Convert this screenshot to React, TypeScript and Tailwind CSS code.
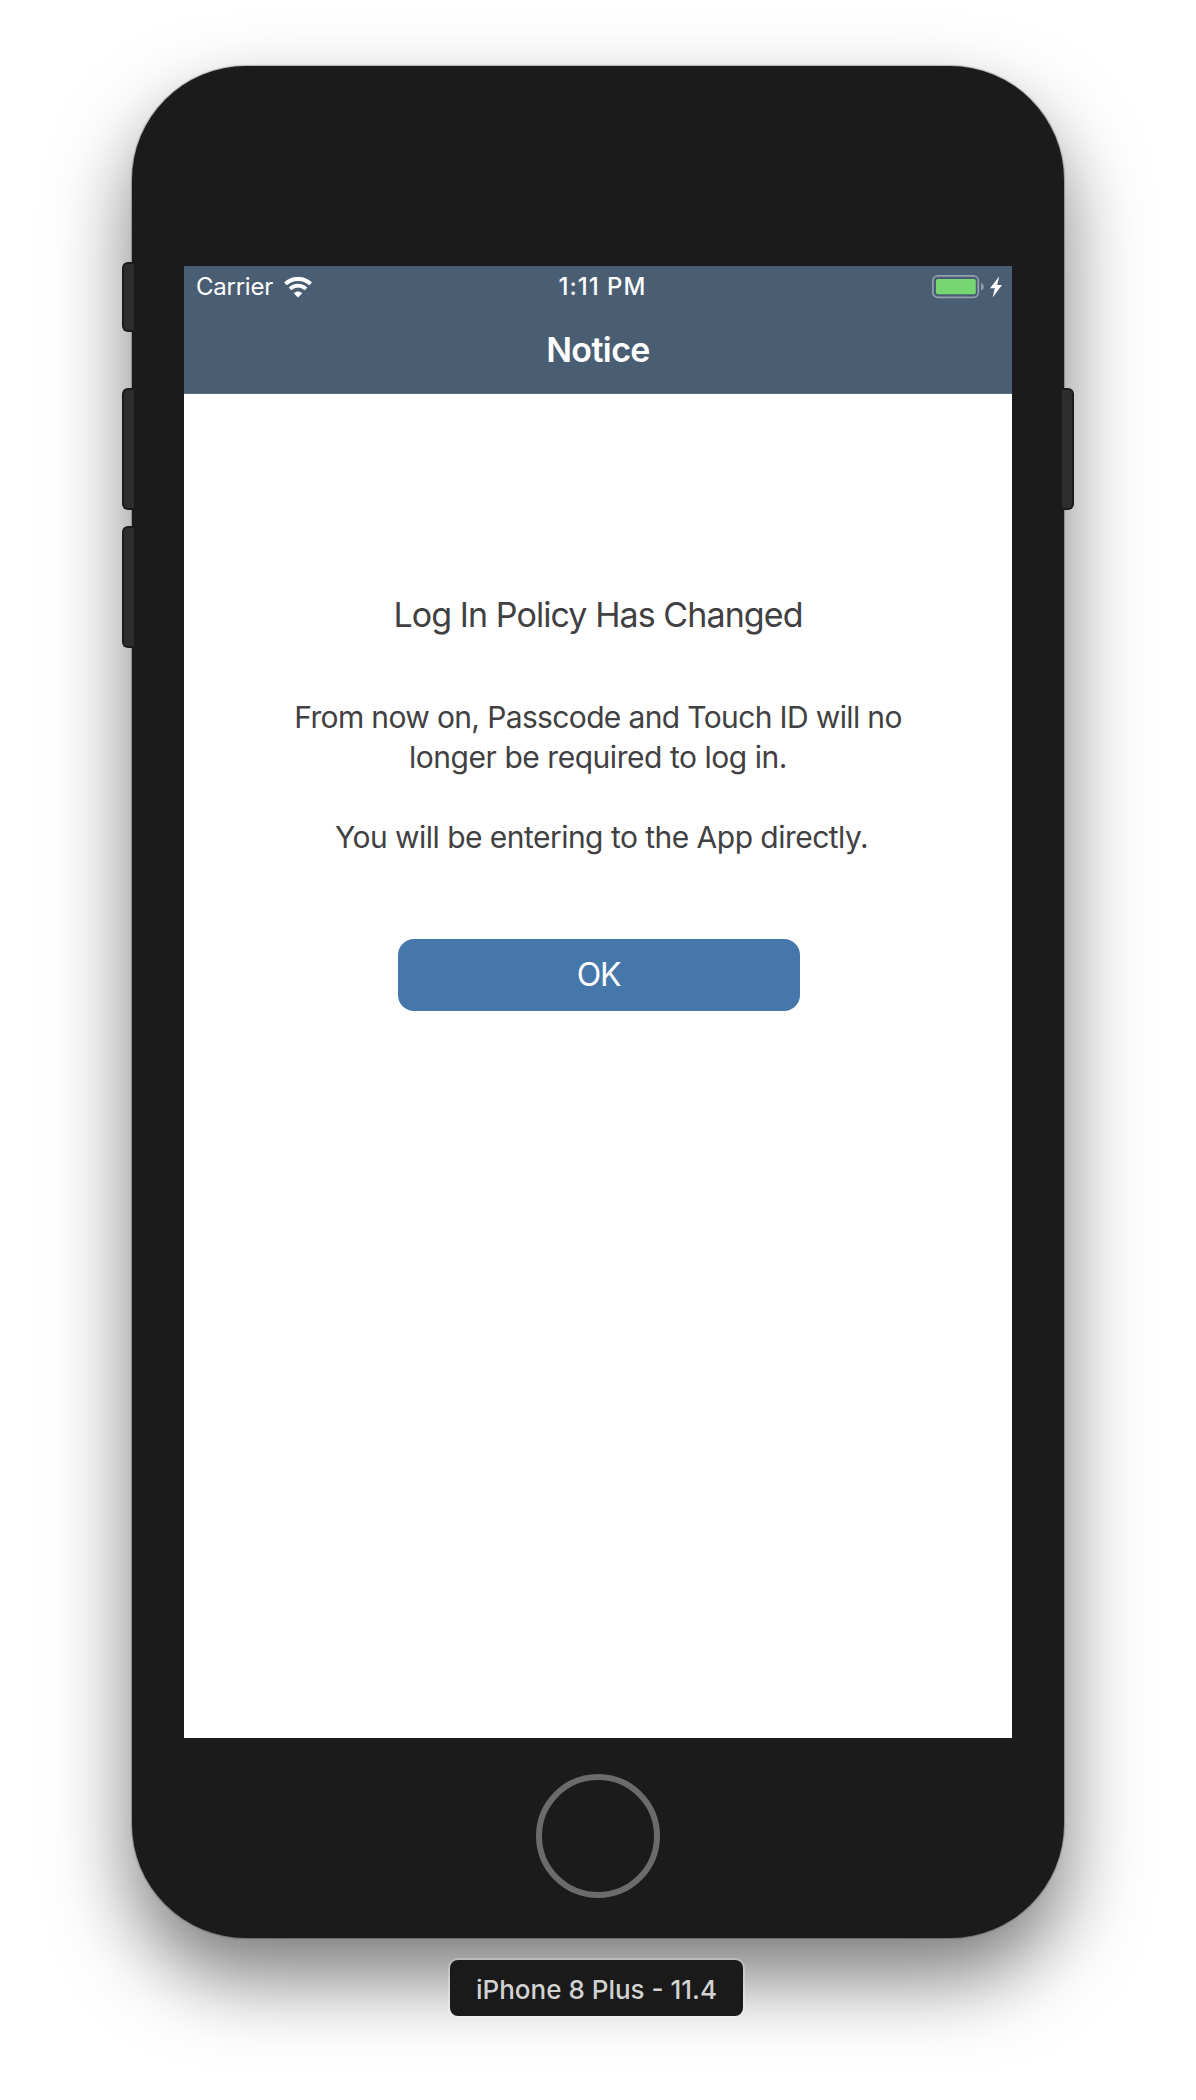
import React from "react";

function WifiIcon() {
  return (
    <svg width="28" height="21" viewBox="0 0 28 21" fill="none">
      <path d="M1.4 6.9C8.6 0.2 19.4 0.2 26.6 6.9" stroke="#fff" strokeWidth="4" />
      <path d="M6 11.8C10.6 7.6 17.4 7.6 22 11.8" stroke="#fff" strokeWidth="3.8" />
      <path d="M9.8 16.2C12.2 14 15.8 14 18.2 16.2L14 20.4Z" fill="#fff" />
    </svg>
  );
}

function BatteryIcon() {
  return (
    <svg width="52" height="24" viewBox="0 0 52 24" fill="none">
      <rect x="0.9" y="0.9" width="45.4" height="21.4" rx="4.6" stroke="#929EAC" strokeWidth="1.7" />
      <rect x="4" y="3.9" width="39.8" height="15.4" rx="2" fill="#76D672" />
      <path d="M49 8C51 9 51.8 10.2 51.8 11.8C51.8 13.4 51 14.6 49 15.6Z" fill="#929EAC" />
    </svg>
  );
}

function BoltIcon() {
  return (
    <svg width="12" height="22" viewBox="0 0 12 22" fill="#fff">
      <path d="M9.2 0.5L0 12.2H4.8L2.6 21.5L12 9H7.2Z" />
    </svg>
  );
}

export default function App() {
  return (
    <div className="flex h-[2100px] w-[1196px] flex-col items-center overflow-hidden bg-white pt-[66px] font-['Inter',sans-serif]">
      <div className="relative h-[1872px] w-[932px] shrink-0">
        <div className="flex h-full w-full flex-col items-center rounded-[114px] bg-[#1b1b1b] pt-[200px] shadow-[0_0_1px_1px_rgba(0,0,0,0.25),0_40px_80px_rgba(0,0,0,0.52)]">
          <main className="flex h-[1472px] w-[828px] flex-col bg-white text-[#414042]">
            <header className="h-32 border-b border-[#5d6e82] bg-[#4a5e73] text-white">
              <div className="grid h-[42px] grid-cols-[1fr_auto_1fr] items-center pr-2.5 pl-3 text-[24px] leading-[42px]">
                <div className="flex items-center gap-[11px]">
                  <span className="tracking-[-0.25px]">Carrier</span>
                  <WifiIcon />
                </div>
                <span className="pl-[7px] font-medium tracking-[1px]">1:11 PM</span>
                <div className="flex items-center justify-end gap-1.5">
                  <BatteryIcon />
                  <BoltIcon />
                </div>
              </div>
              <h1 className="text-center text-[34px] leading-[84px] font-semibold tracking-[-0.6px]">Notice</h1>
            </header>
            <section className="flex flex-col items-center pt-[200px] text-center">
              <h2 className="text-[34px] leading-[42px] tracking-[-0.92px]">Log In Policy Has Changed</h2>
              <div className="mt-[61px] text-[30px] leading-10 whitespace-nowrap">
                <p className="tracking-[-0.64px]">
                  From now on, Passcode and Touch ID will no
                  <br />
                  <span className="tracking-[-0.46px]">longer be required to log in.</span>
                </p>
                <p className="mt-10 pl-[7px] tracking-[-0.53px]">You will be entering to the App directly.</p>
              </div>
              <button className="mt-[81.5px] ml-px h-[72px] w-[402px] rounded-2xl bg-[#4677aa] text-[32px] tracking-[-1.2px] text-white">OK</button>
            </section>
          </main>
          <div className="mt-9 h-[124px] w-[124px] rounded-full border-[6px] border-[#6b6b6b]" />
        </div>
        <span className="absolute top-[196px] -left-[10px] h-[70px] w-3 rounded-l-md border-2 border-r-0 border-[#1b1b1b] bg-[#2d2d2d]" />
        <span className="absolute top-[322px] -left-[10px] h-[122px] w-3 rounded-l-md border-2 border-r-0 border-[#1b1b1b] bg-[#2d2d2d]" />
        <span className="absolute top-[460px] -left-[10px] h-[122px] w-3 rounded-l-md border-2 border-r-0 border-[#1b1b1b] bg-[#2d2d2d]" />
        <span className="absolute top-[322px] -right-[10px] h-[122px] w-3 rounded-r-md border-2 border-l-0 border-[#1b1b1b] bg-[#2d2d2d]" />
      </div>
      <div className="relative mt-[22px] mr-[3px] flex h-14 w-[293px] shrink-0 items-center justify-center rounded-lg bg-[#1a1a1a] pt-0.5 text-[26px] font-medium text-[#d2d2d2] shadow-[0_0_0_2px_rgba(255,255,255,0.25)]">
        iPhone 8 Plus - 11.4
      </div>
    </div>
  );
}
